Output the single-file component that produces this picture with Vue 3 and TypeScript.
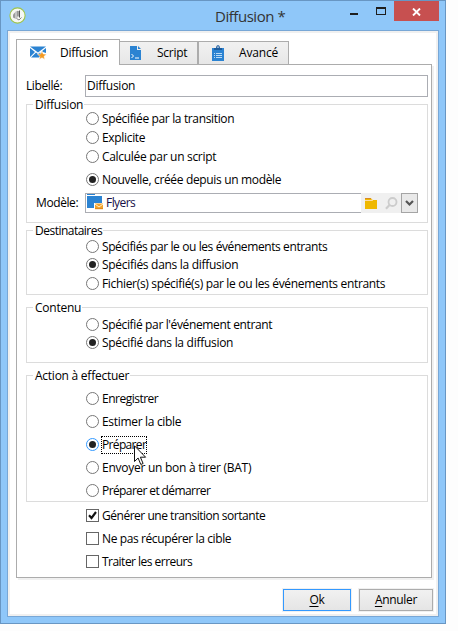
<script setup lang="ts">
import { ref } from 'vue'

interface Option { label: string; width: number; gap: number; focus?: boolean }
interface Group { id: string; title: string; width: number; selected: number; options: Option[] }

const groups = ref<Group[]>([
  {
    id: 'delivery', title: 'Diffusion', width: 48, selected: 3,
    options: [
      { label: 'Spécifiée par la transition', width: 132, gap: 0 },
      { label: 'Explicite', width: 43, gap: 3 },
      { label: 'Calculée par un script', width: 114, gap: 3 },
      { label: 'Nouvelle, créée depuis un modèle', width: 179, gap: 7 },
    ],
  },
  {
    id: 'recipients', title: 'Destinataires', width: 67, selected: 1,
    options: [
      { label: 'Spécifiés par le ou les événements entrants', width: 225, gap: 0 },
      { label: 'Spécifiés dans la diffusion', width: 136, gap: 2 },
      { label: 'Fichier(s) spécifié(s) par le ou les événements entrants', width: 283, gap: 3 },
    ],
  },
  {
    id: 'content', title: 'Contenu', width: 46, selected: 1,
    options: [
      { label: "Spécifié par l'événement entrant", width: 170, gap: 0 },
      { label: 'Spécifié dans la diffusion', width: 131, gap: 2 },
    ],
  },
  {
    id: 'action', title: 'Action à effectuer', width: 94, selected: 2,
    options: [
      { label: 'Enregistrer', width: 56, gap: 0 },
      { label: 'Estimer la cible', width: 79, gap: 7 },
      { label: 'Préparer', width: 44, gap: 7, focus: true },
      { label: 'Envoyer un bon à tirer (BAT)', width: 149, gap: 7 },
      { label: 'Préparer et démarrer', width: 108, gap: 7 },
    ],
  },
])

const checks = ref([
  { label: 'Générer une transition sortante', width: 163, on: true },
  { label: 'Ne pas récupérer la cible', width: 129, on: false },
  { label: 'Traiter les erreurs', width: 90, on: false },
])

// Spreads the tracking of a label so that it fills the given width.
const vFit = {
  mounted(el: HTMLElement, binding: { value: number }) {
    const count = (el.textContent ?? '').length
    const natural = el.getBoundingClientRect().width
    el.style.letterSpacing = `${(binding.value + 0.2 - natural) / count}px`
  },
}
</script>

<template>
  <div class="window">
    <header class="titlebar">
      <svg class="app-icon" width="17" height="17" viewBox="0 0 17 17">
        <circle cx="8.5" cy="8.5" r="7.6" fill="#f7f8f3" stroke="#9fc54a" stroke-width="1.1" />
        <path d="M4 7.500l2-2v6l-2-1z" fill="#9a9a9a" />
        <path d="M6 5l2.500-1.500V11L6 12z" fill="#c4c4c4" />
        <path d="M9 4v5.500M10.500 3.500v7" fill="none" stroke="#555" />
        <path d="M7.500 11.500l2.500 1.500 2.500-2.500" fill="none" stroke="#888" />
      </svg>
      <h1><span v-fit="70">Diffusion *</span></h1>
      <div class="controls">
        <svg width="44" height="20" viewBox="0 0 44 20" shape-rendering="crispEdges">
          <path d="M0 12h8v2H0z" fill="#1e1e1e" />
          <path d="M26 6h10v8H26zM27 8v5h8V8z" fill="#1e1e1e" fill-rule="evenodd" />
        </svg>
        <button class="close" aria-label="Fermer">
          <svg width="9" height="8" viewBox="0 0 9 8"><path d="M1 .5l7 7M8 .5l-7 7" stroke="#fff" stroke-width="1.9" /></svg>
        </button>
      </div>
    </header>

    <main class="client">
      <nav class="tabs">
        <div class="tab active">
          <svg width="17" height="14" viewBox="0 0 17 14">
            <path d="M0 .5h16L8 6.5z" fill="#2b83d2" />
            <path d="M0 2l5 4-5 5zM16 2l-4.500 3.500L16 7z" fill="#2b83d2" />
            <path d="M1 11.500l5-5 2 1.500 2-1.500 2 2-3 3z" fill="#2b83d2" />
            <path d="M12 5l1.200 2.900 3.300.3-2.500 2.200.8 3.100-2.800-1.700-2.800 1.700.8-3.100-2.500-2.200 3.200-.3z" fill="#f39a23" stroke="#fff" stroke-width=".5" />
          </svg>
          <span v-fit="48">Diffusion</span>
        </div>
        <div class="tab script">
          <svg width="11" height="14" viewBox="0 0 11 14">
            <path d="M0 0h7v4h4v10H0z" fill="#2b83d2" /><path d="M8 0l3 3H8z" fill="#2b83d2" />
            <path d="M1.500 8l2 2-2 2M5 12h4" fill="none" stroke="#fff" />
          </svg>
          <span v-fit="30">Script</span>
        </div>
        <div class="tab advanced">
          <svg width="12" height="16" viewBox="0 0 12 16">
            <path d="M0 3h12v13H0z" fill="#2b83d2" />
            <path d="M2 3h2l.5-2L6 0l1.500 1L8 3h2v2H2z" fill="#1c5b9c" /><path d="M5.300 1.500h1.400v1.300H5.300z" fill="#fff" />
            <path d="M2 8.500h1M4 8.500h6M2 10.500h1M4 10.500h6M2 12.500h1M4 12.500h6" stroke="#b9dbf6" />
          </svg>
          <span v-fit="39">Avancé</span>
        </div>
      </nav>

      <section class="panel">
        <div class="name-row">
          <label><span v-fit="36">Libellé:</span></label>
          <div class="field"><span v-fit="48">Diffusion</span></div>
        </div>

        <div v-for="g in groups" :key="g.id" class="group" :class="g.id">
          <h2><span v-fit="g.width">{{ g.title }}</span></h2>
          <div class="options">
            <div
              v-for="(o, i) in g.options" :key="o.label" class="option"
              :class="{ focused: o.focus }" :style="{ marginTop: o.gap + 'px' }" @click="g.selected = i"
            >
              <svg class="radio" width="13" height="13" viewBox="0 0 13 13">
                <circle class="ring" cx="6.500" cy="6.500" r="6" />
                <circle v-if="g.selected === i" cx="6.500" cy="6.500" r="3.500" fill="#222" />
              </svg>
              <span v-fit="o.width" class="text">{{ o.label }}</span>
              <svg v-if="o.focus" class="cursor" width="13" height="21" viewBox="0 0 13 21">
                <path d="M.5.800v15.700l3.600-3.500 2.700 6.500 2.300-1-2.700-6.300h5.200z" fill="#fff" stroke="#111" />
              </svg>
            </div>
          </div>
          <div v-if="g.id === 'delivery'" class="model">
            <label><span v-fit="42">Modèle:</span></label>
            <div class="combo">
              <div class="value">
                <svg width="17" height="16" viewBox="0 0 17 16">
                  <path d="M0 0h8v1H0zM0 2h15v7H7v5H0z" fill="#2b83d2" />
                  <path d="M8 9.500h8v5.500H8z" fill="#f2a32d" />
                  <path d="M8 10l4 3 4-3" fill="none" stroke="#fff1cb" /><path d="M8 14.700h8" stroke="#dc8419" />
                </svg>
                <span v-fit="29">Flyers</span>
              </div>
              <div class="tool">
                <svg width="12" height="11" viewBox="0 0 12 11">
                  <path d="M0 0h6l1 2h5v9H0z" fill="#efb800" /><path d="M0 0h6v1H0z" fill="#d98a24" /><path d="M0 2h7V1h.800v2H0z" fill="#ffdca0" />
                </svg>
              </div>
              <div class="tool">
                <svg width="13" height="13" viewBox="0 0 13 13">
                  <circle cx="7.500" cy="5" r="4" fill="none" stroke="#ccc" stroke-width="1.800" /><path d="M4.500 8L1 11.700" stroke="#ccc" stroke-width="2.200" />
                </svg>
              </div>
              <button class="drop" aria-label="Ouvrir">
                <svg width="9" height="7" viewBox="0 0 9 7"><path d="M1 1l3.500 3.500L8 1" fill="none" stroke="#555" stroke-width="2.200" /></svg>
              </button>
            </div>
          </div>
        </div>

        <div class="checks">
          <div v-for="c in checks" :key="c.label" class="option" @click="c.on = !c.on">
            <span class="box">
              <svg v-if="c.on" width="11" height="11" viewBox="0 0 11 11"><path d="M2 5.300l2.500 2.700L9 2" fill="none" stroke="#111" stroke-width="2.100" /></svg>
            </span>
            <span v-fit="c.width" class="text">{{ c.label }}</span>
          </div>
        </div>
      </section>

      <footer>
        <button class="btn primary"><span v-fit="15"><u>O</u>k</span></button>
        <button class="btn"><span v-fit="42"><u>A</u>nnuler</span></button>
      </footer>
    </main>
  </div>
</template>

<style>
body { background: #fdfdfd; }
</style>

<style scoped>
* { box-sizing: border-box; }
.window {
  width: 446px; height: 624px; padding: 0 6px; border: 1px solid #6896c3;
  background: #8fc7f9; color: #000; font: 12px/16px "Open Sans", "Noto Sans", sans-serif; white-space: nowrap;
}
h1, h2 { margin: 0; font-weight: 400; }
svg { display: block; flex: none; }
button { padding: 0; border: 0; font: inherit; color: inherit; }
.titlebar { display: flex; height: 29px; }
.app-icon { margin: 6px 0 0 2px; }
h1 { width: 80px; margin: 4px 0 0 189px; font-size: 15px; line-height: 22px; color: #333; }
.controls { display: flex; margin-left: auto; }
.close { display: flex; align-items: center; justify-content: center; width: 45px; height: 20px; padding-top: 1px; background: #c75050; }
.client { width: 432px; height: 587px; padding: 7px 4px 0 6px; border: 1px solid #78a7d6; background: #fff; box-shadow: inset 0 0 0 2px #f0f0f0; }
.tabs { display: flex; align-items: flex-end; height: 26px; margin: 1px 0 -1px 2px; position: relative; }
.tab { display: flex; align-items: center; height: 24px; border: 1px solid #acacac; background: linear-gradient(#f1f1f1, #e7e7e7); }
.tab.active { width: 104px; height: 26px; padding: 1px 0 0 13px; border-bottom: 0; background: #fff; gap: 13px; }
.tab.script { width: 78px; padding-left: 10px; gap: 16px; border-left: 0; }
.tab.advanced { width: 91px; padding-left: 13px; gap: 15px; }
.panel { width: 416px; height: 514px; margin-left: 2px; padding: 10px 3px 0 9px; border: 1px solid #acacac; box-shadow: 2px 2px #f0f0f0; }
.name-row { display: flex; align-items: center; height: 22px; }
.name-row label { width: 59px; }
.field { flex: 1; height: 22px; padding: 2px 1px; border: 1px solid #abadb3; }
.group { width: 402px; border: 1px solid #dcdcdc; }
.group h2 { width: fit-content; height: 16px; margin: -8px 0 0 6px; padding: 0 1px 0 2px; background: #fff; font-size: 12px; }
.delivery { height: 119px; margin-top: 7px; }
.recipients { height: 65px; margin-top: 7px; }
.content { height: 56px; margin-top: 12px; }
.action { height: 127px; margin-top: 12px; }
.options { padding-left: 59px; }
.content .options { padding-top: 1px; }
.action .options { padding-top: 7px; }
.delivery .options { margin-top: -2px; }
.option { display: flex; align-items: center; gap: 3px; height: 16px; }
.radio, .box { margin-bottom: 1px; }
.ring { fill: #fff; stroke: #777; }
.focused .ring { stroke: #3399ff; }
.focused { position: relative; }
.focused .text { outline: 1px dotted #000; }
.cursor { position: absolute; left: 48px; top: 8px; }
.model { display: flex; align-items: center; height: 20px; margin: 5px 0 0 9px; }
.model label { width: 49px; }
.combo { display: flex; width: 333px; height: 20px; }
.value { display: flex; align-items: center; width: 276px; padding-left: 1px; gap: 2px; border: 1px solid #abadb3; border-right: 0; color: #171048; }
.value svg { align-self: flex-start; }
.tool { display: flex; align-items: center; justify-content: center; width: 20px; background: #f0f0f0; }
.drop { display: flex; align-items: center; justify-content: center; width: 17px; flex: none; border: 1px solid #a5a5a5; background: #e9e9e9; }
.checks { display: grid; gap: 7px; padding: 6px 0 0 60px; }
.box { width: 13px; height: 13px; border: 1px solid #666; }
footer { display: flex; gap: 8px; margin: 11px 0 0 269px; }
.btn { width: 68px; height: 22px; border: 1px solid #acacac; background: linear-gradient(#f1f1f1, #e5e5e5); box-shadow: 0 0 0 1px #f0f0f0; line-height: 18px; }
.btn + .btn { width: 74px; }
.primary { border-color: #3399ff; }
u { text-underline-offset: 2px; }
</style>
